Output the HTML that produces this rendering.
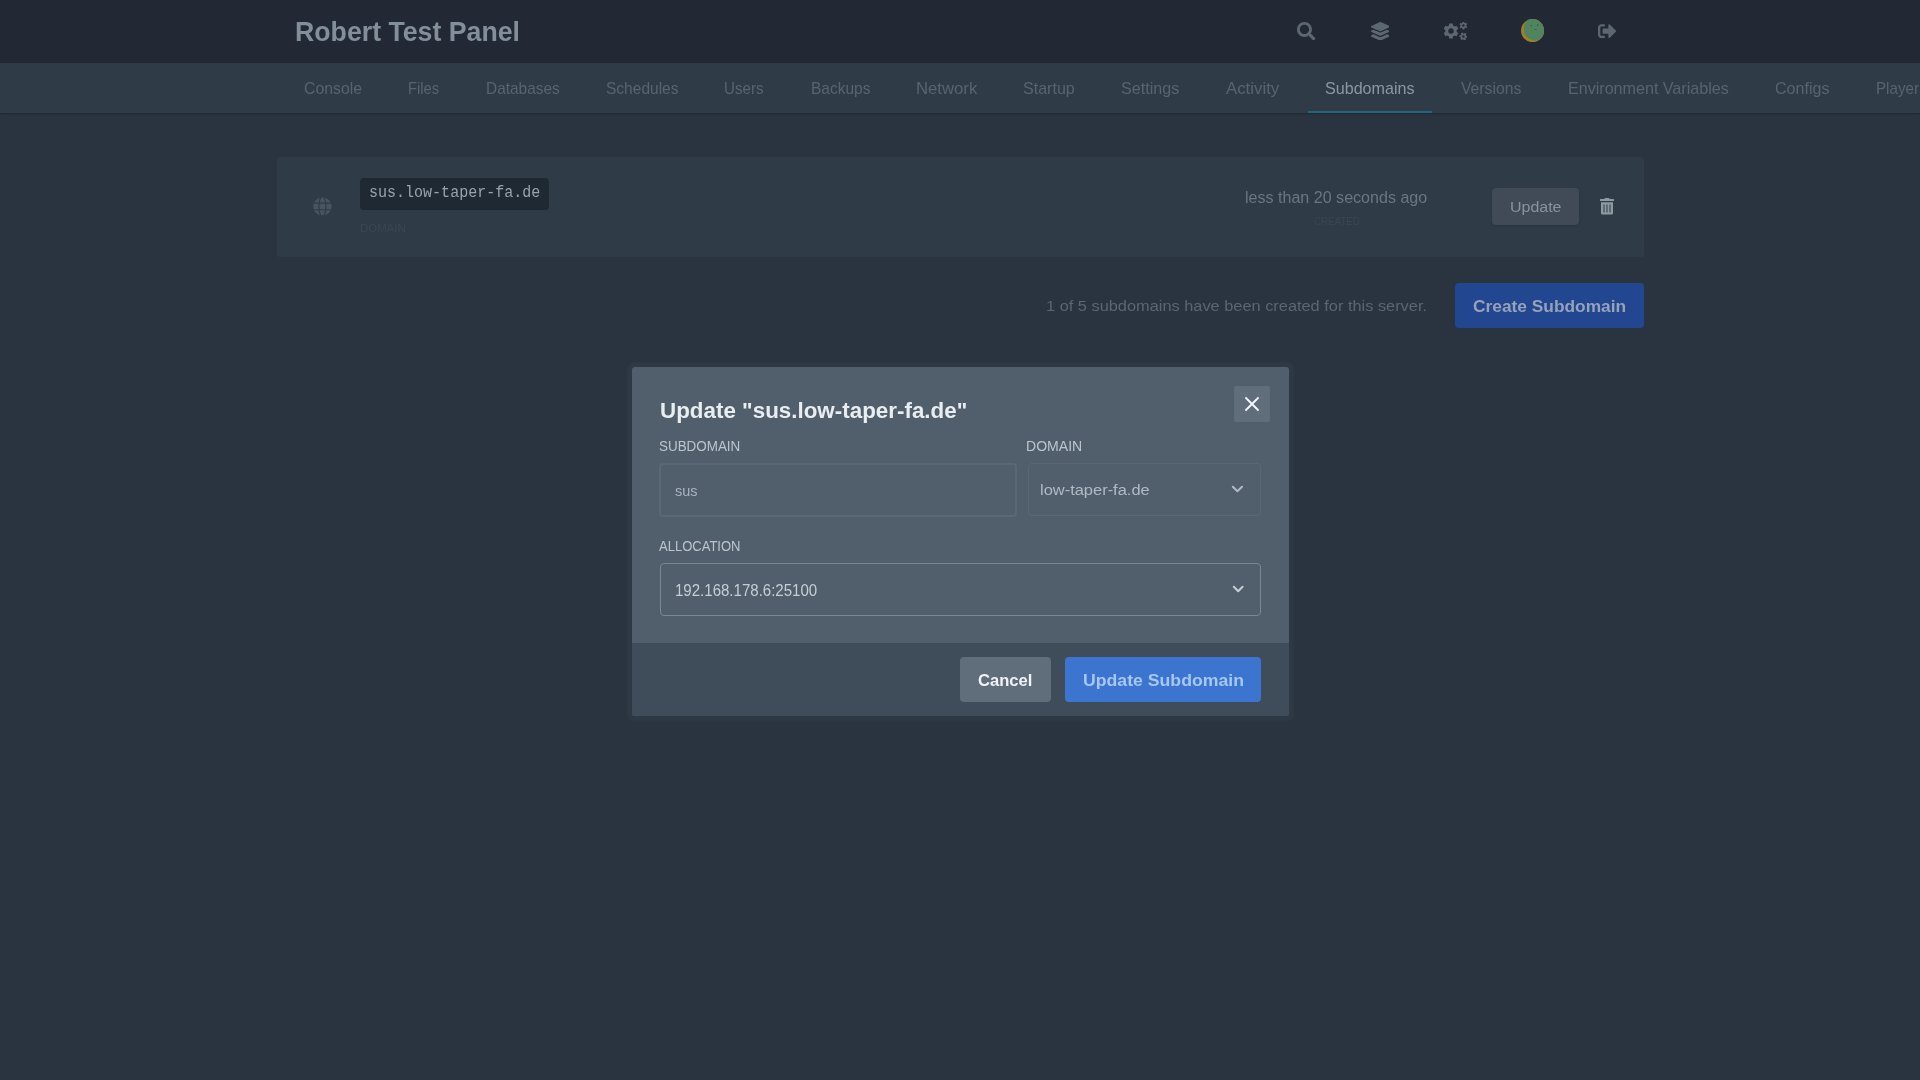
<!DOCTYPE html><html lang="en"><head><meta charset="utf-8"><title>Robert Test Panel</title><style>
html,body{margin:0;padding:0;}body{width:1920px;height:1080px;overflow:hidden;position:relative;background:#293440;font-family:'Liberation Sans', sans-serif;}.t{position:absolute;white-space:nowrap;transform-origin:0 50%;}svg{position:absolute;display:block;}
</style></head><body>
<div style="position:absolute;left:0px;top:0px;width:1920.00px;height:62.50px;background:#222834;border-radius:0px;"></div>
<div style="position:absolute;left:0px;top:62.5px;width:1920.00px;height:50.50px;background:#2f3b46;border-radius:0px;box-shadow:0 1px 2px rgba(0,0,0,0.25);"></div>
<div style="position:absolute;left:1307.9px;top:110.6px;width:124.30px;height:2.40px;background:#1e667c;border-radius:0px;"></div>
<div style="position:absolute;left:276.5px;top:157.4px;width:1367.50px;height:99.20px;background:#2f3b46;border-radius:3px;"></div>
<div style="position:absolute;left:360px;top:178.3px;width:189.00px;height:31.40px;background:#1f2933;border-radius:4px;"></div>
<div style="position:absolute;left:1492px;top:188px;width:87.00px;height:37.00px;background:#404b57;border-radius:4px;box-shadow:0 1px 2px rgba(0,0,0,0.12);"></div>
<div style="position:absolute;left:1455.4px;top:282.5px;width:188.60px;height:45.80px;background:#22468f;border-radius:4px;"></div>
<div style="position:absolute;left:626.6px;top:362px;width:667.6px;height:359.2px;border-radius:7px;background:rgba(81,95,108,0.12);filter:blur(0.8px);"></div>
<div style="position:absolute;left:631.7px;top:367px;width:657.4px;height:349px;border-radius:3px;background:#515f6c;overflow:hidden;"><div style="position:absolute;left:0;right:0;top:275.8px;bottom:0;background:#3f4d5a;"></div></div>
<div style="position:absolute;left:1234.2px;top:385.8px;width:35.50px;height:35.90px;background:#606d7b;border-radius:3px;"></div>
<div style="position:absolute;left:659.2px;top:463px;width:357.80px;height:53.60px;background:transparent;border-radius:4px;box-sizing:border-box;border:2px solid #5a6875;"></div>
<div style="position:absolute;left:1027.5px;top:463px;width:233.30px;height:52.80px;background:transparent;border-radius:4px;box-sizing:border-box;border:1px solid #5a6875;"></div>
<div style="position:absolute;left:659.5px;top:563.4px;width:601.80px;height:52.30px;background:transparent;border-radius:4px;box-sizing:border-box;border:1px solid #7b8793;"></div>
<div style="position:absolute;left:960.4px;top:657.1px;width:91.10px;height:45.30px;background:#606d7b;border-radius:4px;"></div>
<div style="position:absolute;left:1065.3px;top:657.1px;width:196.20px;height:45.30px;background:#3c75cf;border-radius:4px;"></div>
<svg style="left:1297.3px;top:22px" width="18.4" height="18.4" viewBox="0 0 512 512"><path fill="#5d6772" d="M505 442.7L405.3 343c-4.5-4.5-10.6-7-17-7H372c27.6-35.3 44-79.7 44-128C416 93.1 322.900 0 208 0S0 93.100 0 208s93.100 208 208 208c48.300 0 92.700-16.400 128-44v16.300c0 6.400 2.500 12.500 7 17l99.700 99.700c9.400 9.400 24.600 9.400 33.900 0l28.300-28.300c9.400-9.400 9.400-24.600.1-34zM208 336c-70.700 0-128-57.200-128-128 0-70.700 57.200-128 128-128 70.700 0 128 57.200 128 128 0 70.700-57.200 128-128 128z"/></svg>
<svg style="left:1370.7px;top:21.5px" width="18.6" height="18.6" viewBox="0 0 512 512"><path fill="#5d6772" d="M12.410 148.020l232.940 105.670c6.800 3.090 14.490 3.090 21.290 0l232.940-105.670c16.550-7.510 16.550-32.520 0-40.030L266.650 2.310a25.607 25.607 0 0 0-21.290 0L12.410 107.980c-16.550 7.510-16.550 32.530 0 40.040zm487.180 88.280l-58.090-26.330-161.640 73.270c-7.560 3.430-15.590 5.170-23.860 5.170s-16.290-1.740-23.860-5.170L70.510 209.970l-58.100 26.330c-16.550 7.500-16.550 32.500 0 40l232.940 105.590c6.800 3.080 14.490 3.080 21.290 0L499.590 276.300c16.550-7.500 16.550-32.500 0-40zm0 127.800l-57.870-26.230-161.860 73.370c-7.560 3.430-15.590 5.170-23.860 5.170s-16.290-1.740-23.860-5.170L70.290 337.870 12.410 364.100c-16.550 7.500-16.550 32.500 0 40l232.940 105.590c6.800 3.080 14.490 3.080 21.290 0L499.590 404.100c16.550-7.500 16.550-32.500 0-40z"/></svg>
<svg style="left:1443.8px;top:21.8px" width="23.2" height="18.56" viewBox="0 0 640 512"><path fill="#5d6772" fill-rule="evenodd" d="M248.93 397.91 L243.78 453.83 L142.22 453.83 L137.07 397.91 L91.14 371.39 L40.14 394.89 L-10.64 306.93 L35.21 274.52 L35.21 221.48 L-10.64 189.07 L40.14 101.11 L91.14 124.61 L137.07 98.09 L142.22 42.17 L243.78 42.17 L248.93 98.09 L294.86 124.61 L345.86 101.11 L396.64 189.07 L350.79 221.48 L350.79 274.52 L396.64 306.93 L345.86 394.89 L294.86 371.39Z M268.00 248.00 A75 75 0 1 0 118.00 248.00 A75 75 0 1 0 268.00 248.00Z M614.18 110.39 L643.29 127.59 L617.56 174.68 L587.37 159.48 L564.73 173.27 L564.39 207.08 L510.74 208.34 L508.81 174.59 L485.54 161.88 L456.10 178.49 L428.18 132.66 L456.44 114.12 L455.82 87.61 L426.71 70.41 L452.44 23.32 L482.63 38.52 L505.27 24.73 L505.61 -9.08 L559.26 -10.34 L561.19 23.41 L584.46 36.12 L613.90 19.51 L641.82 65.34 L613.56 83.88Z M569.00 99.00 A34 34 0 1 0 501.00 99.00 A34 34 0 1 0 569.00 99.00Z M612.37 379.66 L645.87 384.16 L640.52 437.55 L606.79 435.31 L591.30 456.83 L604.15 488.10 L555.24 510.16 L540.32 479.82 L513.93 477.18 L493.28 503.94 L449.72 472.60 L468.53 444.52 L457.63 420.34 L424.13 415.84 L429.48 362.45 L463.21 364.69 L478.70 343.17 L465.85 311.90 L514.76 289.84 L529.68 320.18 L556.07 322.82 L576.72 296.06 L620.28 327.40 L601.47 355.48Z M569.00 400.00 A34 34 0 1 0 501.00 400.00 A34 34 0 1 0 569.00 400.00Z"/></svg>
<svg style="left:1598.4px;top:21.7px" width="18.4" height="18.4" viewBox="0 0 512 512"><path fill="#5d6772" d="M497 273L329 441c-15 15-41 4.500-41-17v-96H152c-13.300 0-24-10.700-24-24v-96c0-13.300 10.700-24 24-24h136V88c0-21.400 25.900-32 41-17l168 168c9.300 9.400 9.300 24.600 0 34zM192 436v-40c0-6.600-5.400-12-12-12H96c-17.700 0-32-14.300-32-32V160c0-17.700 14.300-32 32-32h84c6.600 0 12-5.400 12-12V76c0-6.600-5.400-12-12-12H96c-53 0-96 43-96 96v192c0 53 43 96 96 96h84c6.600 0 12-5.400 12-12z"/></svg>
<svg style="left:1520.9px;top:19px" width="23.2" height="23.2" viewBox="0 0 36 36"><defs><clipPath id="av"><circle cx="18" cy="18" r="18"/></clipPath></defs><g clip-path="url(#av)"><rect width="36" height="36" fill="#a07f2c"/><rect x="0" y="0" width="36" height="36" rx="18" transform="translate(4.2 -2.6)" fill="#52835f"/><circle cx="16" cy="10.5" r="1.2" fill="#2f5a3c"/><circle cx="26" cy="9.5" r="1.2" fill="#2f5a3c"/><path d="M19.5 15.5 q3 2.5 6 0" fill="#2f5a3c"/></g></svg>
<svg style="left:1599.8px;top:198.2px" width="14" height="16.5" viewBox="0 0 448 512" preserveAspectRatio="none"><path fill="#8f99a3" d="M32 464a48 48 0 0 0 48 48h288a48 48 0 0 0 48-48V128H32zm272-256a16 16 0 0 1 32 0v224a16 16 0 0 1-32 0zm-96 0a16 16 0 0 1 32 0v224a16 16 0 0 1-32 0zm-96 0a16 16 0 0 1 32 0v224a16 16 0 0 1-32 0zM432 32H312l-9.400-18.700A24 24 0 0 0 281.100 0H166.800a23.720 23.720 0 0 0-21.400 13.300L136 32H16A16 16 0 0 0 0 48v32a16 16 0 0 0 16 16h416a16 16 0 0 0 16-16V48a16 16 0 0 0-16-16z"/></svg>
<svg style="left:313.3px;top:196.9px" width="18.8" height="18.8" viewBox="0 0 36 36"><circle cx="18" cy="18" r="17.6" fill="#48555f"/><g fill="none" stroke="#2f3b46" stroke-width="2.3"><ellipse cx="18" cy="18" rx="6.800" ry="19"/><path d="M0 11.600H36M0 24.400H36"/></g></svg>
<svg style="left:1242px;top:393.8px" width="20" height="20" viewBox="0 0 20 20"><path d="M4 4L16 16M16 4L4 16" stroke="#f5f7fa" stroke-width="1.9" stroke-linecap="round" fill="none"/></svg>
<svg style="left:1230px;top:484px" width="14.799999999999955" height="10" viewBox="0 0 14.80 10.00"><path d="M2.800 2.800L7.40 7.20L12.00 2.800" stroke="#b0bac4" stroke-width="2" stroke-linecap="round" stroke-linejoin="round" fill="none"/></svg>
<svg style="left:1230.6px;top:584.4px" width="14.400000000000091" height="10.0" viewBox="0 0 14.40 10.00"><path d="M2.800 2.800L7.20 7.20L11.60 2.800" stroke="#c5ced6" stroke-width="2" stroke-linecap="round" stroke-linejoin="round" fill="none"/></svg>
<span class="t" id="t0" style="left:295px;top:17.55px;font-size:28px;line-height:28px;font-weight:700;color:#838e9b;font-family:'Liberation Sans', sans-serif;transform:scaleX(0.9535);">Robert Test Panel</span>
<span class="t" id="t1" style="left:303.75px;top:80.91px;font-size:15.7px;line-height:15.7px;font-weight:400;color:#58646f;font-family:'Liberation Sans', sans-serif;transform:scaleX(1.0076);">Console</span>
<span class="t" id="t2" style="left:408.25px;top:80.91px;font-size:15.7px;line-height:15.7px;font-weight:400;color:#58646f;font-family:'Liberation Sans', sans-serif;transform:scaleX(0.9434);">Files</span>
<span class="t" id="t3" style="left:485.75px;top:80.91px;font-size:15.7px;line-height:15.7px;font-weight:400;color:#58646f;font-family:'Liberation Sans', sans-serif;transform:scaleX(0.9833);">Databases</span>
<span class="t" id="t4" style="left:605.75px;top:80.91px;font-size:15.7px;line-height:15.7px;font-weight:400;color:#58646f;font-family:'Liberation Sans', sans-serif;transform:scaleX(0.9896);">Schedules</span>
<span class="t" id="t5" style="left:724.25px;top:80.91px;font-size:15.7px;line-height:15.7px;font-weight:400;color:#58646f;font-family:'Liberation Sans', sans-serif;transform:scaleX(0.9641);">Users</span>
<span class="t" id="t6" style="left:810.5px;top:80.91px;font-size:15.7px;line-height:15.7px;font-weight:400;color:#58646f;font-family:'Liberation Sans', sans-serif;transform:scaleX(0.9888);">Backups</span>
<span class="t" id="t7" style="left:915.5px;top:80.91px;font-size:15.7px;line-height:15.7px;font-weight:400;color:#58646f;font-family:'Liberation Sans', sans-serif;transform:scaleX(1.0643);">Network</span>
<span class="t" id="t8" style="left:1023.25px;top:80.91px;font-size:15.7px;line-height:15.7px;font-weight:400;color:#58646f;font-family:'Liberation Sans', sans-serif;transform:scaleX(1.0229);">Startup</span>
<span class="t" id="t9" style="left:1121.25px;top:80.91px;font-size:15.7px;line-height:15.7px;font-weight:400;color:#58646f;font-family:'Liberation Sans', sans-serif;transform:scaleX(1.0276);">Settings</span>
<span class="t" id="t10" style="left:1226.25px;top:80.91px;font-size:15.7px;line-height:15.7px;font-weight:400;color:#58646f;font-family:'Liberation Sans', sans-serif;transform:scaleX(1.0717);">Activity</span>
<span class="t" id="t11" style="left:1325px;top:80.91px;font-size:15.7px;line-height:15.7px;font-weight:400;color:#8d97a1;font-family:'Liberation Sans', sans-serif;transform:scaleX(1.0262);">Subdomains</span>
<span class="t" id="t12" style="left:1461px;top:80.91px;font-size:15.7px;line-height:15.7px;font-weight:400;color:#58646f;font-family:'Liberation Sans', sans-serif;transform:scaleX(1.0013);">Versions</span>
<span class="t" id="t13" style="left:1567.5px;top:80.91px;font-size:15.7px;line-height:15.7px;font-weight:400;color:#58646f;font-family:'Liberation Sans', sans-serif;transform:scaleX(1.0260);">Environment Variables</span>
<span class="t" id="t14" style="left:1775px;top:80.91px;font-size:15.7px;line-height:15.7px;font-weight:400;color:#58646f;font-family:'Liberation Sans', sans-serif;transform:scaleX(1.0244);">Configs</span>
<span class="t" id="t15" style="left:1875.75px;top:80.91px;font-size:15.7px;line-height:15.7px;font-weight:400;color:#58646f;font-family:'Liberation Sans', sans-serif;transform:scaleX(0.9661);">Player Manager</span>
<span class="t" id="t16" style="left:368.7px;top:186.44px;font-size:15.6px;line-height:15.6px;font-weight:400;color:#98a3ae;font-family:'Liberation Mono', monospace;transform:scaleX(0.9634);">sus.low-taper-fa.de</span>
<span class="t" id="t17" style="left:360px;top:222.64px;font-size:10.7px;line-height:10.7px;font-weight:400;color:#3a4652;font-family:'Liberation Sans', sans-serif;transform:scaleX(1.0713);">DOMAIN</span>
<span class="t" id="t18" style="left:1244.8px;top:189.99px;font-size:15.6px;line-height:15.6px;font-weight:400;color:#6a7682;font-family:'Liberation Sans', sans-serif;transform:scaleX(1.0302);">less than 20 seconds ago</span>
<span class="t" id="t19" style="left:1314px;top:215.61px;font-size:10.5px;line-height:10.5px;font-weight:400;color:#3a4652;font-family:'Liberation Sans', sans-serif;transform:scaleX(0.9270);">CREATED</span>
<span class="t" id="t20" style="left:1510px;top:198.88px;font-size:15.5px;line-height:15.5px;font-weight:400;color:#8793a0;font-family:'Liberation Sans', sans-serif;transform:scaleX(1.0303);">Update</span>
<span class="t" id="t21" style="left:1046px;top:298.08px;font-size:15.5px;line-height:15.5px;font-weight:400;color:#5a6671;font-family:'Liberation Sans', sans-serif;transform:scaleX(1.0553);">1 of 5 subdomains have been created for this server.</span>
<span class="t" id="t22" style="left:1473.4px;top:297.61px;font-size:17px;line-height:17px;font-weight:700;color:#96a1ba;font-family:'Liberation Sans', sans-serif;transform:scaleX(1.0193);">Create Subdomain</span>
<span class="t" id="t23" style="left:659.7px;top:399.57px;font-size:22.6px;line-height:22.6px;font-weight:700;color:#e8edf2;font-family:'Liberation Sans', sans-serif;transform:scaleX(0.9907);">Update &quot;sus.low-taper-fa.de&quot;</span>
<span class="t" id="t24" style="left:659px;top:439.24px;font-size:14.6px;line-height:14.6px;font-weight:400;color:#bcc5ce;font-family:'Liberation Sans', sans-serif;transform:scaleX(0.9198);">SUBDOMAIN</span>
<span class="t" id="t25" style="left:1025.8px;top:439.24px;font-size:14.6px;line-height:14.6px;font-weight:400;color:#bcc5ce;font-family:'Liberation Sans', sans-serif;transform:scaleX(0.9627);">DOMAIN</span>
<span class="t" id="t26" style="left:675px;top:482.68px;font-size:15.5px;line-height:15.5px;font-weight:400;color:#a9b3bd;font-family:'Liberation Sans', sans-serif;transform:scaleX(0.9326);">sus</span>
<span class="t" id="t27" style="left:1040.3px;top:481.88px;font-size:15.5px;line-height:15.5px;font-weight:400;color:#b0bac4;font-family:'Liberation Sans', sans-serif;transform:scaleX(1.0610);">low-taper-fa.de</span>
<span class="t" id="t28" style="left:659.1px;top:539.44px;font-size:14.6px;line-height:14.6px;font-weight:400;color:#bcc5ce;font-family:'Liberation Sans', sans-serif;transform:scaleX(0.8919);">ALLOCATION</span>
<span class="t" id="t29" style="left:675px;top:581.69px;font-size:16.2px;line-height:16.2px;font-weight:400;color:#c5ced6;font-family:'Liberation Sans', sans-serif;transform:scaleX(0.9292);">192.168.178.6:25100</span>
<span class="t" id="t30" style="left:978.3px;top:672.31px;font-size:17px;line-height:17px;font-weight:700;color:#f0f3f6;font-family:'Liberation Sans', sans-serif;transform:scaleX(0.9758);">Cancel</span>
<span class="t" id="t31" style="left:1082.6px;top:672.31px;font-size:17px;line-height:17px;font-weight:700;color:#a6c6f4;font-family:'Liberation Sans', sans-serif;transform:scaleX(1.0393);">Update Subdomain</span>
</body></html>
